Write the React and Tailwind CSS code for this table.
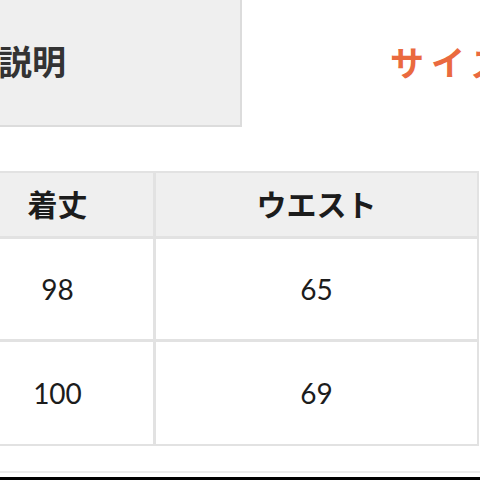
export default function App() {
  const jp = { fontFamily: '"Noto Sans CJK JP", "Noto Sans", sans-serif' };
  const num = { fontFamily: 'Lato, "Noto Sans CJK JP", sans-serif' };
  return (
    <div className="w-[480px] h-[480px] overflow-hidden bg-white flex flex-col">
      <div className="flex h-[127px] shrink-0" style={jp}>
        <div className="ml-[-244px] w-[486px] shrink-0 bg-[#efefef] border-r-2 border-b-2 border-[#dcdcdc] flex items-center justify-center pb-[4px]">
          <span className="text-[34px] font-bold text-[#333333] whitespace-nowrap leading-none">商品説明</span>
        </div>
        <div className="flex-1 flex items-center pl-[148px] pb-[4px] overflow-hidden">
          <span className="text-[34px] font-bold text-[#ea6a3f] whitespace-nowrap leading-none tracking-[7px]">サイズ表</span>
        </div>
      </div>

      <div className="mt-[44px] ml-[-40px] w-[519px] shrink-0 border-2 border-[#e2e2e2]">
        <div className="grid grid-cols-[194px_1fr] h-[66px] bg-[#efefef] border-b-[3px] border-[#e2e2e2]" style={jp}>
          <div className="flex items-center justify-center border-r-[3px] border-[#e2e2e2] pb-[4px]">
            <span className="text-[30px] font-bold text-[#1c1c1c] leading-none">着丈</span>
          </div>
          <div className="flex items-center justify-center pb-[4px]">
            <span className="text-[30px] font-bold text-[#1c1c1c] leading-none">ウエスト</span>
          </div>
        </div>
        <div className="grid grid-cols-[194px_1fr] h-[103px] border-b-[3px] border-[#e2e2e2]" style={num}>
          <div className="flex items-center justify-center border-r-[3px] border-[#e2e2e2]">
            <span className="text-[28px] text-[#1c1c1c] leading-none">98</span>
          </div>
          <div className="flex items-center justify-center">
            <span className="text-[28px] text-[#1c1c1c] leading-none">65</span>
          </div>
        </div>
        <div className="grid grid-cols-[194px_1fr] h-[102px]" style={num}>
          <div className="flex items-center justify-center border-r-[3px] border-[#e2e2e2]">
            <span className="text-[28px] text-[#1c1c1c] leading-none">100</span>
          </div>
          <div className="flex items-center justify-center">
            <span className="text-[28px] text-[#1c1c1c] leading-none">69</span>
          </div>
        </div>
      </div>

      <div className="mt-[25px] h-[2px] bg-[#ececec] shrink-0"></div>
      <div className="mt-[4px] h-[4px] bg-black shrink-0"></div>
    </div>
  );
}
